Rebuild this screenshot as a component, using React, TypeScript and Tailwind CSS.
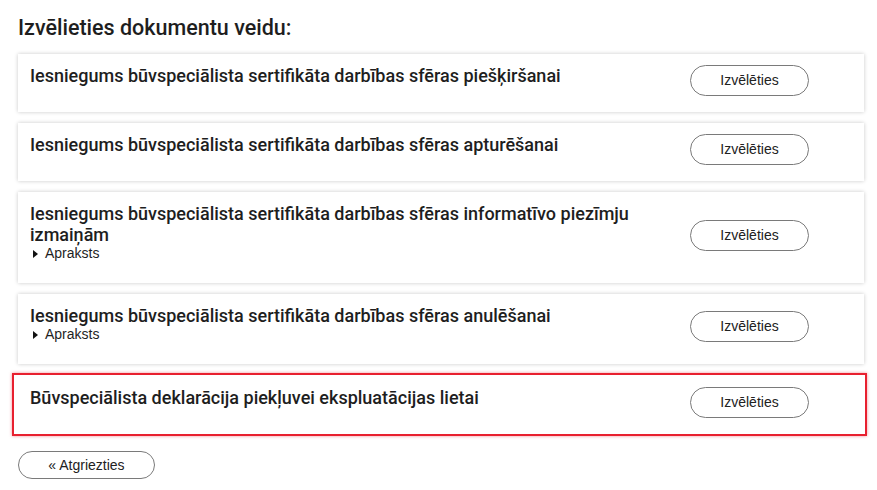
import React from 'react';

type DocType = {
  id: number;
  title: string;
  hasDescription?: boolean;
  selected?: boolean;
};

const docTypes: DocType[] = [
  { id: 1, title: 'Iesniegums būvspeciālista sertifikāta darbības sfēras piešķiršanai' },
  { id: 2, title: 'Iesniegums būvspeciālista sertifikāta darbības sfēras apturēšanai' },
  { id: 3, title: 'Iesniegums būvspeciālista sertifikāta darbības sfēras informatīvo piezīmju izmaiņām', hasDescription: true },
  { id: 4, title: 'Iesniegums būvspeciālista sertifikāta darbības sfēras anulēšanai', hasDescription: true },
  { id: 5, title: 'Būvspeciālista deklarācija piekļuvei ekspluatācijas lietai', selected: true },
];

const pillClass =
  "rounded-full border border-[#7a7a7a] bg-white text-[14px] text-[#222] font-['Liberation_Sans',Arial,sans-serif] hover:bg-gray-50";

const DocCard: React.FC<{ doc: DocType }> = ({ doc }) => {
  const frame = doc.selected
    ? 'mt-[-2px] ml-[-6px] mr-[-3px] border-2 border-[#e8202f] pl-4 pr-[56px] pt-3 pb-4 shadow-[0_0_3px_rgba(232,32,47,0.5)]'
    : 'pl-3 pr-[55px] pt-[11px] pb-4 shadow-[0_0_4px_rgba(0,0,0,0.22)]';

  return (
    <div className={`flex items-start bg-white ${frame}`}>
      <div className="flex-1 pr-4">
        <div className="text-[18px] leading-[21px] font-medium text-[#1e1e1e]">{doc.title}</div>
        {doc.hasDescription && (
          <div className="flex items-center gap-[7px] pl-[3px] pb-[5px] text-[14px] leading-[17px] text-[#1e1e1e] font-['Liberation_Sans',Arial,sans-serif]">
            <span className="inline-block h-0 w-0 border-y-[4px] border-l-[5px] border-y-transparent border-l-[#111]" />
            <span>Apraksts</span>
          </div>
        )}
      </div>
      <button type="button" className={`${pillClass} h-[31px] w-[119px] shrink-0 self-center`}>
        Izvēlēties
      </button>
    </div>
  );
};

export default function App() {
  return (
    <div className="min-h-screen bg-white pl-[18px] pr-[13px] pt-[13px] font-['Roboto','Noto_Sans',sans-serif] text-[#1e1e1e]">
      <h2 className="text-[21.5px] leading-[30px] font-medium text-[#1e1e1e] mb-[11px]">Izvēlieties dokumentu veidu:</h2>
      <div className="flex flex-col gap-[11px]">
        {docTypes.map(d => (
          <DocCard key={d.id} doc={d} />
        ))}
      </div>
      <button type="button" className={`${pillClass} mt-[15px] h-[28px] w-[137px]`}>
        « Atgriezties
      </button>
    </div>
  );
}
